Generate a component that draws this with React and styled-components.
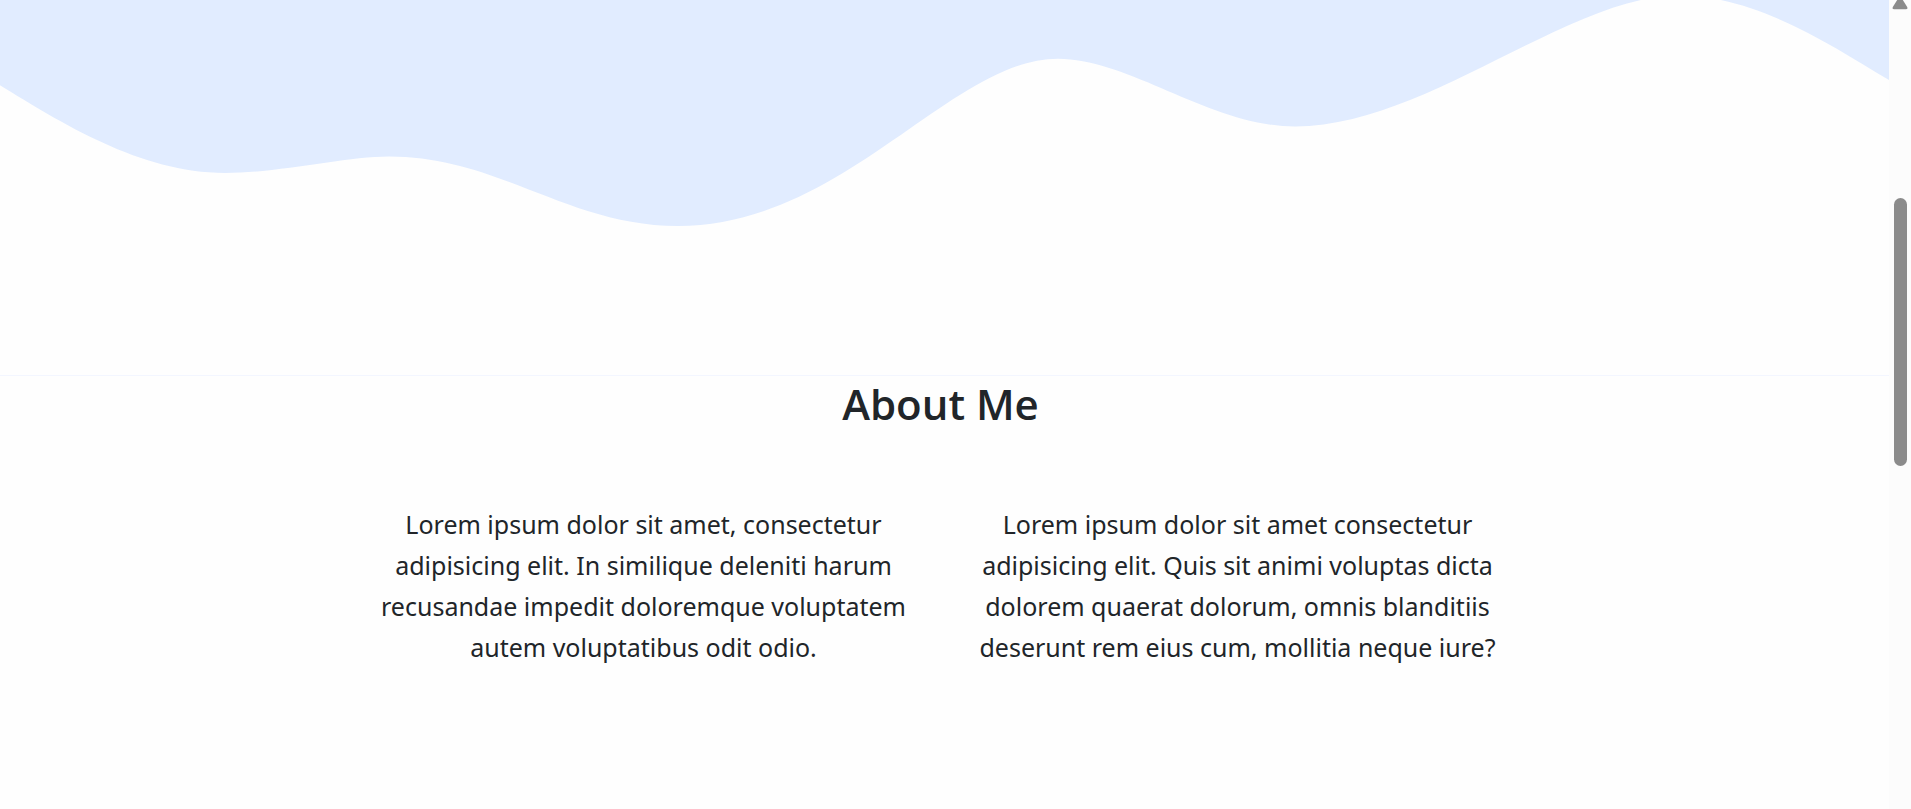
import React from "react";
import styled, { createGlobalStyle } from "styled-components";

const GlobalStyle = createGlobalStyle`
  *, *::before, *::after { box-sizing: border-box; }
  body {
    margin: 0;
    background: #fefefe;
    color: #212529;
    font-family: "Segoe UI", "Noto Sans", "Open Sans", sans-serif;
    overflow: hidden;
  }
`;

const Page = styled.div`
  display: flex;
  height: 100vh;
`;

const Content = styled.main`
  flex: 1;
  min-width: 0;
  overflow: hidden;
`;

const Hero = styled.header`
  border-bottom: 1px solid #f3f6ff;
`;

const Wave = styled.svg`
  display: block;
  width: 100%;
  height: 375px;
`;

const About = styled.section`
  display: flex;
  flex-direction: column;
  align-items: center;
  gap: 72px;
  padding: 0 8px 0 0;
`;

const Title = styled.h2`
  margin: 0;
  font-family: "Segoe UI", "Open Sans", sans-serif;
  font-size: 42px;
  font-weight: 600;
  line-height: 56px;
`;

const Columns = styled.div`
  display: grid;
  grid-template-columns: repeat(2, minmax(0, 546px));
  gap: 48px;
`;

const Paragraph = styled.p`
  margin: 0;
  font-size: 25px;
  line-height: 41px;
  text-align: center;
`;

const ScrollTrack = styled.div`
  display: flex;
  flex-direction: column;
  align-items: center;
  flex: 0 0 22px;
  gap: 188px;
  background: #fcfcfc;
`;

const ArrowUp = styled.svg`
  display: block;
  width: 16px;
  height: 10px;
`;

const ScrollThumb = styled.div`
  width: 13px;
  height: 268px;
  border-radius: 7px;
  background: #8b8b8b;
`;

const paragraphs = [
  "Lorem ipsum dolor sit amet, consectetur adipisicing elit. In similique deleniti harum recusandae impedit doloremque voluptatem autem voluptatibus odit odio.",
  "Lorem ipsum dolor sit amet consectetur adipisicing elit. Quis sit animi voluptas dicta dolorem quaerat dolorum, omnis blanditiis deserunt rem eius cum, mollitia neque iure?",
];

export default function App() {
  return (
    <>
      <GlobalStyle />
      <Page>
        <Content>
          <Hero>
            <Wave viewBox="0 0 1889 375" preserveAspectRatio="none" aria-hidden="true">
              <path
                fill="#e1ecff"
                d="M0 -20V85.3C60 122 140 173 225 173C280 173 345 156.5 389 156.5C499 156.5 568 226 678 226C844 226 951 58.7 1058 58.7C1130 58.7 1211 126.5 1295 126.5C1426 126.5 1568 -4.5 1679 -4.5C1756 -4.5 1829 44 1889 80V-20Z"
              />
            </Wave>
          </Hero>
          <About>
            <Title>About Me</Title>
            <Columns>
              {paragraphs.map((text) => (
                <Paragraph key={text}>{text}</Paragraph>
              ))}
            </Columns>
          </About>
        </Content>
        <ScrollTrack aria-hidden="true">
          <ArrowUp viewBox="0 0 16 10">
            <path
              fill="#8b8b8b"
              d="M5.2 0H10.8L15.2 7Q16 9.2 14 9.3H2Q0 9.2 .8 7Z"
            />
          </ArrowUp>
          <ScrollThumb />
        </ScrollTrack>
      </Page>
    </>
  );
}
